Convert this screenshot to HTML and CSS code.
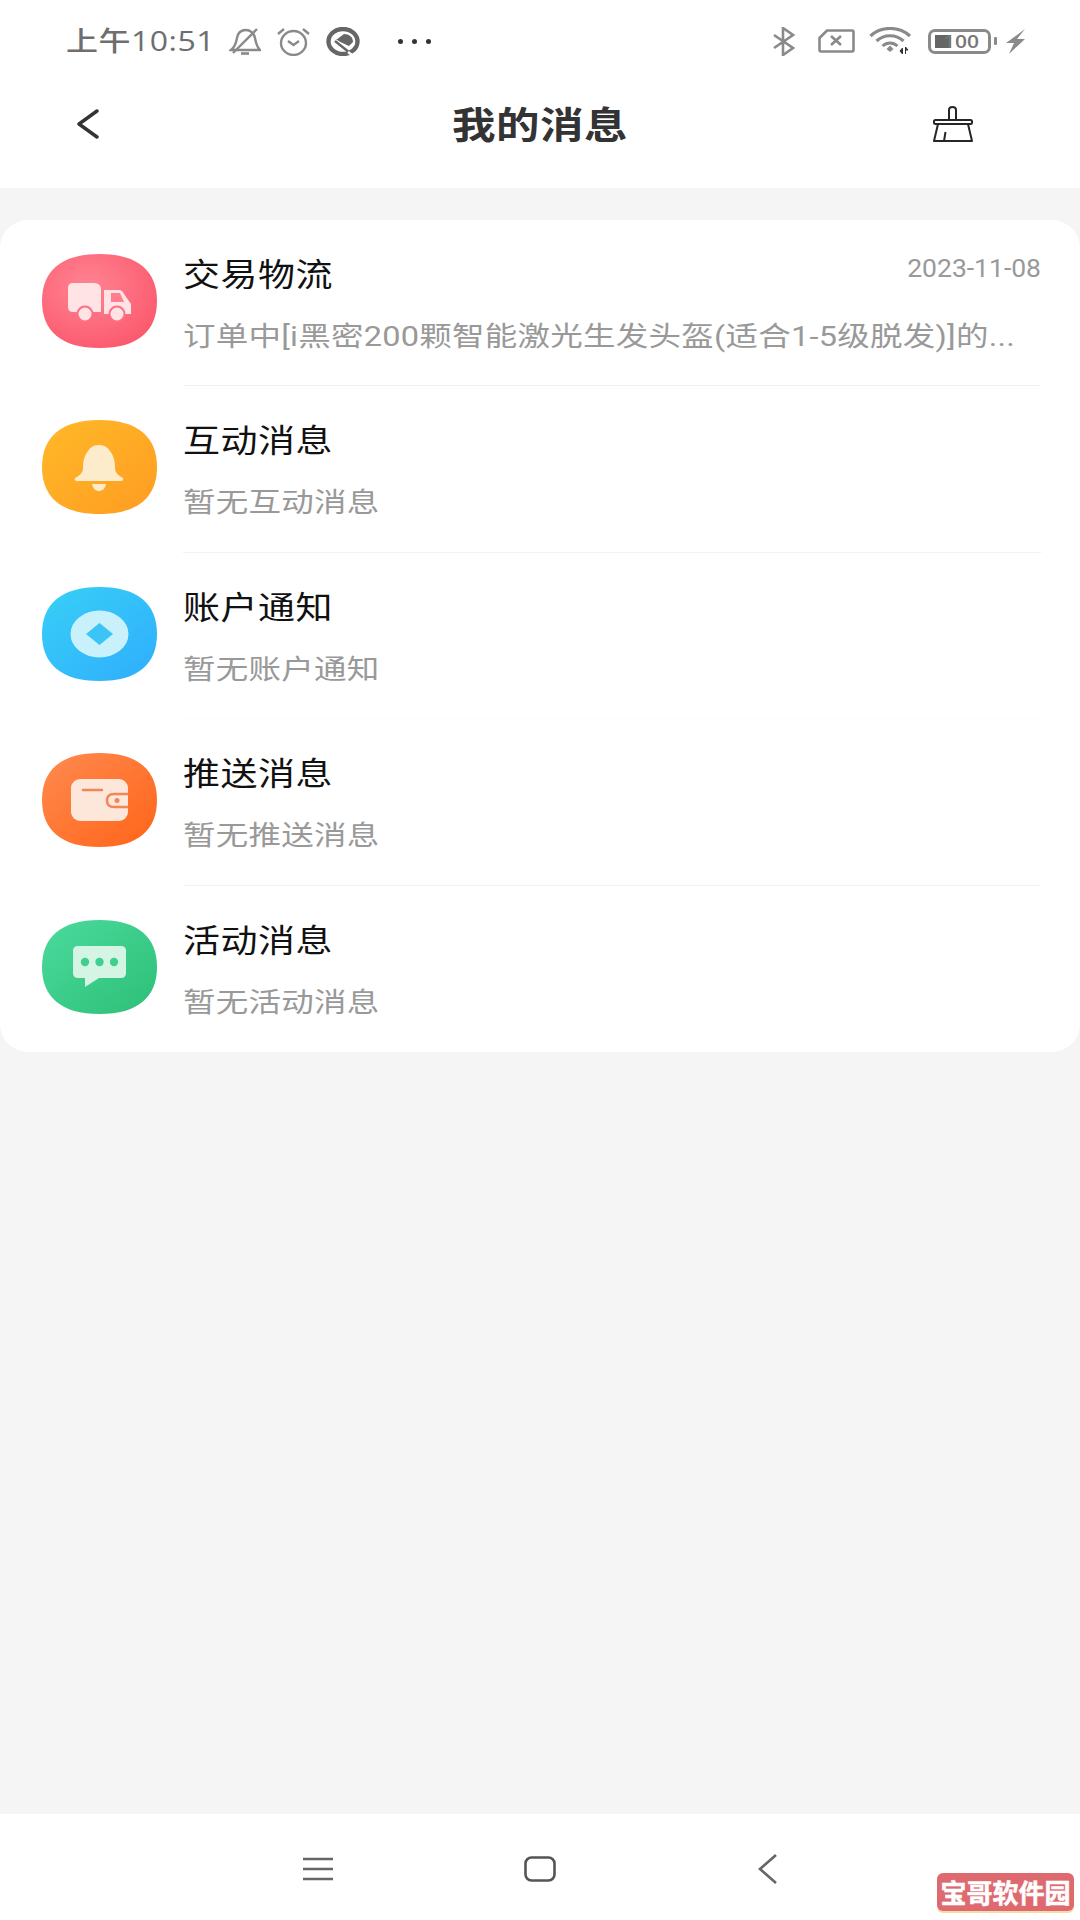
FILE: index.html
```html
<!DOCTYPE html>
<html lang="zh-CN">

<head>
    <meta charset="UTF-8">
    <title>我的消息</title>
    <link rel="stylesheet" href="styles.css">
</head>

<body>
    <div class="phone">
        <header class="top">
            <div class="status-bar">
                <span class="clock squash">上午10:51</span>
                <!-- bell off -->
                <svg class="st st-bell" width="32" height="27" viewBox="0 0 32 27" fill="none" stroke="#8a8a8a" stroke-width="2.4">
                    <path d="M2 22 C6 19 7 16 8 10 C9 4 13 2 17 2 C21 2 25 5 26 10 C27 16 28 19 31 22 Z" />
                    <path d="M4 25 L28 1" />
                    <path d="M12 25.5 H20" stroke-width="2.6" />
                </svg>
                <!-- alarm -->
                <svg class="st st-alarm" width="33" height="29" viewBox="0 0 33 29" fill="none" stroke="#8a8a8a" stroke-width="2.4">
                    <ellipse cx="16.500" cy="16" rx="12.500" ry="12" />
                    <path d="M1 7 L7 2 M32 7 L26 2" />
                    <path d="M11 14 L16.500 18 L22 14" />
                </svg>
                <!-- data saver -->
                <svg class="st st-saver" width="34" height="29" viewBox="0 0 34 29" fill="none">
                    <path d="M10 13 L18 7 C23 7 27 10 27 15 L23 19 Z" fill="#666" />
                    <path d="M9 15 L27 29" stroke="#fff" stroke-width="6" />
                    <ellipse cx="17" cy="14.500" rx="14.500" ry="12.500" stroke="#666" stroke-width="4.400" />
                    <path d="M9 14 L24 26" stroke="#666" stroke-width="2.400" />
                    <path d="M22 25 L30 31" stroke="#fff" stroke-width="2.500" />
                </svg>
                <span class="more">
                    <i></i><i></i><i></i>
                </span>
                <span class="spacer"></span>
                <!-- bluetooth -->
                <svg class="st st-bt" width="22" height="29" viewBox="0 0 22 29" fill="none" stroke="#8a8a8a" stroke-width="2.600">
                    <path d="M1 8 L20 21 L10 28 V1 L20 8 L1 21" />
                </svg>
                <!-- no sim -->
                <svg class="st st-sim" width="37" height="24" viewBox="0 0 37 24" fill="none" stroke="#8a8a8a" stroke-width="2.600">
                    <path d="M1.500 9 L9 1.500 H34 Q35.500 1.500 35.500 3 V21 Q35.500 22.500 34 22.500 H3 Q1.500 22.500 1.500 21 Z" />
                    <path d="M13 7 L23 16 M23 7 L13 16" />
                </svg>
                <!-- wifi -->
                <svg class="st st-wifi" width="43" height="28" viewBox="0 0 43 28" fill="none">
                    <path d="M1.500 9 C12 -1 30 -1 41 9" stroke="#8a8a8a" stroke-width="3.200" />
                    <path d="M7.500 14 C15 7 27 7 34.500 14" stroke="#8a8a8a" stroke-width="3.200" />
                    <path d="M13.500 19 C18 15 24 15 28.500 19" stroke="#8a8a8a" stroke-width="3" />
                    <path d="M17.500 22 L21 18.500 L24.500 22 L21 25 Z" fill="#8a8a8a" />
                    <path d="M33.500 21 V27 L31 24 Z M36.500 20 V27 M36.500 20 L39 23 H36.500" fill="#333" stroke="#333" stroke-width="1" />
                </svg>
                <span class="battery">
                    <span class="battery-shell">
                        <span class="battery-fill"></span>
                        <span class="battery-num squash">100</span>
                    </span>
                    <i class="battery-nub"></i>
                </span>
                <!-- charging bolt -->
                <svg class="st st-bolt" width="20" height="25" viewBox="0 0 20 25">
                    <path d="M19 0 L11 10 H19 L3 25 L8 14 H0 Z" fill="#8a8a8a" />
                </svg>
            </div>
            <div class="toolbar">
                <svg class="back-icon" width="24" height="30" viewBox="0 0 24 30" fill="none" stroke="#333" stroke-width="3.400" stroke-linecap="round" stroke-linejoin="round">
                    <path d="M21 2 L3 15 L21 28" />
                </svg>
                <h1 class="page-title squash">我的消息</h1>
                <svg class="clear-icon" width="40" height="36" viewBox="0 0 40 36" fill="none" stroke="#262626" stroke-width="2" stroke-linejoin="round">
                    <path d="M16 14 V4 Q16 1 19.500 1 Q23 1 23 4 V14" />
                    <rect x="1" y="14" width="38" height="4" rx="1.500" />
                    <path d="M5 18 L1 35 H39 L35 18" />
                    <path d="M11 35 L12.500 26" />
                </svg>
            </div>
        </header>

        <main class="content">
            <ul class="msg-list">
                <li class="msg-row">
                    <svg class="msg-icon" width="115" height="94" viewBox="0 0 115 94">
                        <defs>
                            <radialGradient id="g-red" cx=".4" cy=".35" r=".8">
                                <stop offset="0" stop-color="#ff8493" />
                                <stop offset="1" stop-color="#fb5368" />
                            </radialGradient>
                        </defs>
                        <path d="M57.500 0 C96 0 115 17 115 47 C115 77 96 94 57.500 94 C19 94 0 77 0 47 C0 17 19 0 57.500 0 Z" fill="url(#g-red)" />
                        <path d="M31 29 H52 Q59 29 59 36 V58 H31 Q26 58 26 53 V34 Q26 29 31 29 Z" fill="#ffe3e5" />
                        <path d="M62 36 H77 Q80 36 82 40 L89 50 V60 H62 Z" fill="#ffe3e5" />
                        <path d="M69 39 H78 L82 48 H69 Z" fill="#ff7d8d" />
                        <circle cx="43" cy="60" r="7.500" fill="#ffe3e5" stroke="#ff6f81" stroke-width="2" />
                        <circle cx="75" cy="60" r="7.500" fill="#ffe3e5" stroke="#ff6f81" stroke-width="2" />
                    </svg>
                    <div class="msg-body">
                        <div class="msg-head">
                            <span class="msg-title squash">交易物流</span>
                            <span class="msg-date">2023-11-08</span>
                        </div>
                        <p class="msg-sub squash">订单中[i黑密200颗智能激光生发头盔(适合1-5级脱发)]的...</p>
                    </div>
                </li>
                <li class="msg-row">
                    <svg class="msg-icon" width="115" height="94" viewBox="0 0 115 94">
                        <defs>
                            <linearGradient id="g-yellow" x1="0" y1="0" x2="1" y2="1">
                                <stop offset="0" stop-color="#ffb928" />
                                <stop offset="1" stop-color="#ff9c22" />
                            </linearGradient>
                        </defs>
                        <path d="M57.500 0 C96 0 115 17 115 47 C115 77 96 94 57.500 94 C19 94 0 77 0 47 C0 17 19 0 57.500 0 Z" fill="url(#g-yellow)" />
                        <path d="M57 25 C63 25 66 28 68 31 C72 36 73 42 73 48 C73 53 77 56 81 58 Q82 61 79 61 H35 Q32 61 33 58 C37 56 41 53 41 48 C41 42 42 36 46 31 C48 28 51 25 57 25 Z" fill="#fdeccb" />
                        <path d="M50 64 H64 C63 69 60 71 57 71 C54 71 51 69 50 64 Z" fill="#fdeccb" />
                    </svg>
                    <div class="msg-body">
                        <div class="msg-head">
                            <span class="msg-title squash">互动消息</span>
                        </div>
                        <p class="msg-sub squash">暂无互动消息</p>
                    </div>
                </li>
                <li class="msg-row msg-row-faint">
                    <svg class="msg-icon" width="115" height="94" viewBox="0 0 115 94">
                        <defs>
                            <linearGradient id="g-blue" x1="0" y1="0" x2="1" y2="1">
                                <stop offset="0" stop-color="#38d0f6" />
                                <stop offset="1" stop-color="#2fadfd" />
                            </linearGradient>
                        </defs>
                        <path d="M57.500 0 C96 0 115 17 115 47 C115 77 96 94 57.500 94 C19 94 0 77 0 47 C0 17 19 0 57.500 0 Z" fill="url(#g-blue)" />
                        <ellipse cx="57.500" cy="47" rx="29" ry="23.500" fill="#c9f1fb" />
                        <path d="M57.500 36 L71 47 L57.500 58 L44 47 Z" fill="#3cc4f7" />
                    </svg>
                    <div class="msg-body">
                        <div class="msg-head">
                            <span class="msg-title squash">账户通知</span>
                        </div>
                        <p class="msg-sub squash">暂无账户通知</p>
                    </div>
                </li>
                <li class="msg-row">
                    <svg class="msg-icon" width="115" height="94" viewBox="0 0 115 94">
                        <defs>
                            <linearGradient id="g-orange" x1="0" y1="0" x2="1" y2="1">
                                <stop offset="0" stop-color="#ff8a50" />
                                <stop offset="1" stop-color="#ff6418" />
                            </linearGradient>
                        </defs>
                        <path d="M57.500 0 C96 0 115 17 115 47 C115 77 96 94 57.500 94 C19 94 0 77 0 47 C0 17 19 0 57.500 0 Z" fill="url(#g-orange)" />
                        <rect x="29" y="26" width="57" height="42" rx="9" fill="#fde6da" />
                        <path d="M41 37 H60" stroke="#f0865a" stroke-width="2.500" stroke-linecap="round" />
                        <path d="M86 41 H72 Q65 41 65 47.500 Q65 54 72 54 H86" fill="#fde6da" stroke="#f0865a" stroke-width="2.500" />
                        <circle cx="75" cy="47.500" r="2.500" fill="#f0865a" />
                    </svg>
                    <div class="msg-body">
                        <div class="msg-head">
                            <span class="msg-title squash">推送消息</span>
                        </div>
                        <p class="msg-sub squash">暂无推送消息</p>
                    </div>
                </li>
                <li class="msg-row msg-row-last">
                    <svg class="msg-icon" width="115" height="94" viewBox="0 0 115 94">
                        <defs>
                            <linearGradient id="g-green" x1="0" y1="0" x2="1" y2="1">
                                <stop offset="0" stop-color="#4bda9e" />
                                <stop offset="1" stop-color="#2dbf76" />
                            </linearGradient>
                        </defs>
                        <path d="M57.500 0 C96 0 115 17 115 47 C115 77 96 94 57.500 94 C19 94 0 77 0 47 C0 17 19 0 57.500 0 Z" fill="url(#g-green)" />
                        <path d="M36 26 H79 Q84 26 84 31 V53 Q84 58 79 58 H57 L43 67 V58 H36 Q31 58 31 53 V31 Q31 26 36 26 Z" fill="#d4f5e4" />
                        <circle cx="43" cy="42" r="4.200" fill="#3fcf8e" />
                        <circle cx="57.500" cy="42" r="4.200" fill="#3fcf8e" />
                        <circle cx="72" cy="42" r="4.200" fill="#3fcf8e" />
                    </svg>
                    <div class="msg-body">
                        <div class="msg-head">
                            <span class="msg-title squash">活动消息</span>
                        </div>
                        <p class="msg-sub squash">暂无活动消息</p>
                    </div>
                </li>
            </ul>
        </main>

        <nav class="nav-bar">
            <svg width="32" height="24" viewBox="0 0 32 24" fill="none" stroke="#666" stroke-width="2.400">
                <path d="M1 2 H31 M1 12 H31 M1 22 H31" />
            </svg>
            <svg width="32" height="26" viewBox="0 0 32 26" fill="none" stroke="#555" stroke-width="2.600">
                <rect x="1.500" y="1.500" width="29" height="23" rx="6" />
            </svg>
            <svg class="nav-back" width="20" height="30" viewBox="0 0 20 30" fill="none" stroke="#666" stroke-width="2.600">
                <path d="M18 1 L2 15 L18 29" />
            </svg>
        </nav>

        <div class="watermark">宝哥软件园</div>
    </div>
</body>

</html>
```

FILE: styles.css
```css
* {
    box-sizing: border-box;
}

html,
body {
    margin: 0;
    padding: 0;
}

body {
    font-family: "Noto Sans CJK SC", "Noto Sans", sans-serif;
}

.phone {
    position: relative;
    display: flex;
    flex-direction: column;
    width: 1080px;
    height: 1920px;
    overflow: hidden;
    background-color: #f5f5f5;
}

/* the screenshot is squeezed vertically, text has to follow */
.squash {
    display: inline-block;
    transform: scaleY(.85);
}

/* header */
.top {
    height: 188px;
    background-color: #fff;
}

.status-bar {
    display: flex;
    align-items: center;
    height: 82px;
    padding: 0 54px 0 66px;
}

.clock {
    width: 146px;
    font-family: "Open Sans", "Noto Sans CJK SC", sans-serif;
    font-size: 32px;
    font-weight: 500;
    line-height: 40px;
    letter-spacing: .5px;
    white-space: nowrap;
    color: #6e6e6e;
}

.st {
    flex: none;
}

.st-bell {
    margin-left: 17px;
}

.st-alarm {
    margin-left: 16px;
}

.st-saver {
    margin-left: 16px;
}

.more {
    display: flex;
    gap: 9px;
    margin-left: 38px;
}

.more i {
    width: 5px;
    height: 5px;
    border-radius: 50%;
    background-color: #333;
}

.spacer {
    flex: 1;
}

.st-sim {
    margin-left: 23px;
}

.st-wifi {
    margin-left: 14px;
}

.battery {
    display: flex;
    align-items: center;
    gap: 3px;
    margin-left: 16px;
}

.battery-shell {
    position: relative;
    display: flex;
    align-items: center;
    justify-content: flex-end;
    width: 63px;
    height: 25px;
    padding-right: 9px;
    border: 3px solid #8a8a8a;
    border-radius: 7px;
}

.battery-fill {
    position: absolute;
    top: 3px;
    left: 4px;
    width: 16px;
    height: 13px;
    background-color: #666;
}

.battery-num {
    position: relative;
    font-family: "Open Sans", sans-serif;
    font-size: 21px;
    font-weight: 600;
    line-height: 18px;
    color: #777;
}

.battery-nub {
    width: 3px;
    height: 8px;
    border-radius: 1px;
    background-color: #8a8a8a;
}

.st-bolt {
    margin-left: 9px;
}

.toolbar {
    display: grid;
    grid-template-columns: 1fr auto 1fr;
    align-items: center;
    height: 84px;
    padding: 0 76px;
}

.page-title {
    margin: 0;
    font-size: 43.500px;
    font-weight: 700;
    line-height: 50px;
    letter-spacing: .5px;
    color: #333;
}

.clear-icon {
    justify-self: end;
    margin-right: 31px;
}

/* list */
.content {
    flex: 1;
    padding-top: 32px;
}

.msg-list {
    margin: 0;
    padding: 0;
    list-style: none;
    background-color: #fff;
    border-radius: 28px;
}

.msg-row {
    display: flex;
    gap: 26px;
    height: 166.400px;
    padding: 34px 39px 0 42px;
}

.msg-icon {
    flex: none;
}

.msg-body {
    flex: 1;
    min-width: 0;
    margin-top: -34px;
    padding-top: 28px;
    border-bottom: 1px solid #f2f2f2;
}

.msg-row-faint .msg-body {
    border-bottom-color: #fcfcfc;
}

.msg-row-last .msg-body {
    border-bottom: none;
}

.msg-head {
    display: flex;
    align-items: flex-start;
    justify-content: space-between;
    height: 48px;
}

.msg-title {
    font-size: 37px;
    line-height: 48px;
    letter-spacing: .5px;
    color: #111;
}

.msg-date {
    margin-top: -4px;
    font-family: Roboto, sans-serif;
    font-size: 26.500px;
    line-height: 48px;
    color: #999;
}

.msg-sub {
    margin: 19px 0 0;
    font-family: Roboto, "Noto Sans CJK SC", sans-serif;
    font-size: 32.500px;
    line-height: 44px;
    letter-spacing: .25px;
    white-space: nowrap;
    color: #999;
}

/* bottom bar */
.nav-bar {
    display: flex;
    align-items: center;
    gap: 190px;
    height: 106px;
    padding: 4px 0 0 302px;
    background-color: #fff;
}

.nav-back {
    margin-left: 12px;
}

.watermark {
    position: absolute;
    right: 6px;
    bottom: 9px;
    width: 137px;
    height: 38px;
    border-radius: 6px;
    background-color: #de6a70;
    box-shadow: 0 2px 0 #f6dca6;
    font-size: 26px;
    font-weight: 700;
    line-height: 38px;
    text-align: center;
    white-space: nowrap;
    -webkit-text-stroke: .5px #fff;
    color: #fff;
}
```
